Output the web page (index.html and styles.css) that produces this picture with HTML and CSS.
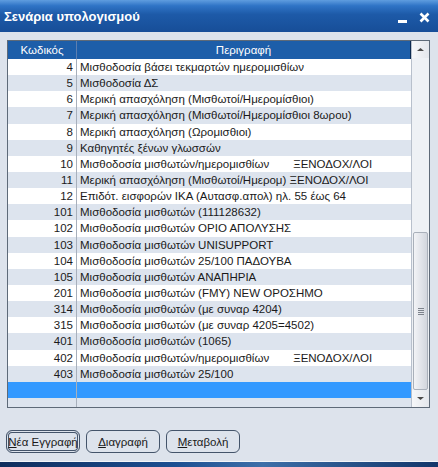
FILE: index.html
```html
<!DOCTYPE html>
<html lang="el">
<head>
    <meta charset="UTF-8">
    <title>Σενάρια υπολογισμού</title>
    <link rel="stylesheet" href="styles.css">
</head>
<body>
    <div class="window">
        <div class="titlebar">
            <span class="title">Σενάρια υπολογισμού</span>
            <span class="controls">
                <svg width="10" height="12" viewBox="0 0 10 12"><rect x="0" y="9" width="9" height="3" fill="#fff"/></svg>
                <svg width="11" height="11" viewBox="0 0 11 11"><path d="M1.5 1.5l8 8M9.5 1.5l-8 8" stroke="#fff" stroke-width="2.6"/></svg>
            </span>
        </div>
        <div class="content">
            <div class="grid">
                <div class="table">
                    <div class="row head"><div class="code">Κωδικός</div><div class="desc">Περιγραφή</div></div>
                    <div class="row"><div class="code">4</div><div class="desc">Μισθοδοσία βάσει τεκμαρτών ημερομισθίων</div></div>
                    <div class="row alt"><div class="code">5</div><div class="desc">Μισθοδοσία ΔΣ</div></div>
                    <div class="row"><div class="code">6</div><div class="desc">Μερική απασχόληση (Μισθωτοί/Ημερομίσθιοι)</div></div>
                    <div class="row alt"><div class="code">7</div><div class="desc">Μερική απασχόληση (Μισθωτοί/Ημερομίσθιοι 8ωρου)</div></div>
                    <div class="row"><div class="code">8</div><div class="desc">Μερική απασχόληση (Ωρομισθιοι)</div></div>
                    <div class="row alt"><div class="code">9</div><div class="desc">Καθηγητές ξένων γλωσσών</div></div>
                    <div class="row"><div class="code">10</div><div class="desc">Μισθοδοσία μισθωτών/ημερομισθίων<span class="gap"></span>ΞΕΝΟΔΟΧ/ΛΟΙ</div></div>
                    <div class="row alt"><div class="code">11</div><div class="desc">Μερική απασχόληση (Μισθωτοί/Ημερομ) ΞΕΝΟΔΟΧ/ΛΟΙ</div></div>
                    <div class="row"><div class="code">12</div><div class="desc">Επιδότ. εισφορών ΙΚΑ (Αυτασφ.απολ) ηλ. 55 έως 64</div></div>
                    <div class="row alt"><div class="code">101</div><div class="desc">Μισθοδοσία μισθωτών (111128632)</div></div>
                    <div class="row"><div class="code">102</div><div class="desc">Μισθοδοσία μισθωτών ΟΡΙΟ ΑΠΟΛΥΣΗΣ</div></div>
                    <div class="row alt"><div class="code">103</div><div class="desc">Μισθοδοσία μισθωτών UNISUPPORT</div></div>
                    <div class="row"><div class="code">104</div><div class="desc">Μισθοδοσία μισθωτών 25/100 ΠΑΔΟΥΒΑ</div></div>
                    <div class="row alt"><div class="code">105</div><div class="desc">Μισθοδοσία μισθωτών ΑΝΑΠΗΡΙΑ</div></div>
                    <div class="row"><div class="code">201</div><div class="desc">Μισθοδοσία μισθωτών (FMY) NEW ΟΡΟΣΗΜΟ</div></div>
                    <div class="row alt"><div class="code">314</div><div class="desc">Μισθοδοσία μισθωτών (με συναρ 4204)</div></div>
                    <div class="row"><div class="code">315</div><div class="desc">Μισθοδοσία μισθωτών (με συναρ 4205=4502)</div></div>
                    <div class="row alt"><div class="code">401</div><div class="desc">Μισθοδοσία μισθωτών (1065)</div></div>
                    <div class="row"><div class="code">402</div><div class="desc">Μισθοδοσία μισθωτών/ημερομισθίων<span class="gap"></span>ΞΕΝΟΔΟΧ/ΛΟΙ</div></div>
                    <div class="row alt"><div class="code">403</div><div class="desc">Μισθοδοσία μισθωτών 25/100</div></div>
                    <div class="row selected"><div class="code"></div><div class="desc"></div></div>
                    <div class="row alt filler"><div class="code"></div><div class="desc"></div></div>
                </div>
                <div class="scrollbar">
                    <div class="arrow">
                        <svg width="9" height="5" viewBox="0 0 9 5"><path d="M1 4h7L4.5 1z" fill="#4a4a4a"/></svg>
                    </div>
                    <div class="track"><div class="thumb"><span class="grip"></span></div></div>
                    <div class="arrow">
                        <svg width="9" height="5" viewBox="0 0 9 5"><path d="M1 1h7L4.5 4z" fill="#4a4a4a"/></svg>
                    </div>
                </div>
            </div>
            <div class="buttons">
                <button class="btn focus"><u>Ν</u>έα Εγγραφή</button>
                <button class="btn"><u>Δ</u>ιαγραφή</button>
                <button class="btn"><u>Μ</u>εταβολή</button>
            </div>
        </div>
        <div class="bottom"></div>
    </div>
</body>
</html>
```

FILE: styles.css
```css
body {
    margin: 0;
    font-family: "Liberation Sans", Arial, sans-serif;
    font-size: 11.5px;
}
.window {
    width: 438px;
    height: 467px;
    display: flex;
    flex-direction: column;
    background: #dde3ec;
}
.titlebar {
    height: 32px;
    display: flex;
    align-items: center;
    justify-content: space-between;
    padding: 0 8px 0 4px;
    background: linear-gradient(#5f9ddf 0%, #2f74c6 18%, #1d5aa8 45%, #174e98 100%);
    color: #fff;
}
.title {
    font-weight: bold;
    font-size: 13px;
    padding-top: 1px;
}
.controls {
    display: flex;
    align-items: center;
    gap: 11px;
    padding-top: 2px;
}
.content {
    flex: 1;
    padding: 8px 7px 0 7px;
    display: flex;
    flex-direction: column;
}
.grid {
    display: flex;
    width: 423px;
    height: 368px;
    border: 1px solid #5e6a78;
    background: #dde4ee;
    box-sizing: border-box;
}
.table {
    flex: 1;
    overflow: hidden;
}
.row {
    display: flex;
    height: 16.15px;
    line-height: 16px;
    background: #fff;
    color: #1a1a1a;
}
.row.alt {
    background: #dde4ee;
}
.row.selected {
    background: #3399ff;
}
.row.filler {
    height: 12px;
}
.row.head {
    height: 18px;
    line-height: 18px;
    background: #1d5ea9;
    color: #fff;
    border-right: 1px solid #0c2a50;
}
.code {
    width: 69px;
    flex: none;
    text-align: right;
    padding-right: 3px;
    box-sizing: border-box;
    border-right: 1px solid #a8b0bc;
}
.desc {
    flex: 1;
    padding-left: 3px;
    white-space: nowrap;
}
.head .code {
    text-align: center;
    padding-right: 0;
    border-right: 1px solid #5d7fb0;
}
.head .desc {
    text-align: center;
    padding-left: 0;
}
.gap {
    display: inline-block;
    width: 24px;
}
.scrollbar {
    width: 17px;
    flex: none;
    display: flex;
    flex-direction: column;
    background: #eef1f5;
    border-left: 1px solid #b8c0cc;
}
.arrow {
    height: 17px;
    display: flex;
    align-items: center;
    justify-content: center;
    background: linear-gradient(90deg, #f6f7f9, #e4e7ec);
}
.track {
    flex: 1;
    display: flex;
    flex-direction: column;
    justify-content: flex-end;
    padding: 0 1px;
}
.thumb {
    height: 156px;
    border: 1px solid #a9b0ba;
    border-radius: 2px;
    background: linear-gradient(90deg, #f2f3f6, #dfe2e8 60%, #d2d6dd);
    display: flex;
    align-items: center;
    justify-content: center;
}
.grip {
    width: 6px;
    height: 7px;
    background: repeating-linear-gradient(#7d838c 0 1px, transparent 1px 2px);
}
.buttons {
    display: flex;
    gap: 6px;
    margin-top: 22px;
    margin-left: -1px;
}
.btn {
    width: 74px;
    height: 23px;
    padding: 0;
    white-space: nowrap;
    font-family: "Liberation Sans", Arial, sans-serif;
    font-size: 11.5px;
    color: #1a1a1a;
    background: #dde3ec;
    border: 1px solid #44546a;
    border-radius: 6px;
}
.btn.focus {
    box-shadow: inset 0 0 0 1px #dde3ec, inset 0 0 0 2px #44546a;
}
.bottom {
    height: 5px;
    margin-top: auto;
    background: linear-gradient(90deg, #0f2d5c, #1c4f92 40%, #3d6fa8 60%, #12366a);
    border-top: 1px solid #f4f6f9;
}
```
